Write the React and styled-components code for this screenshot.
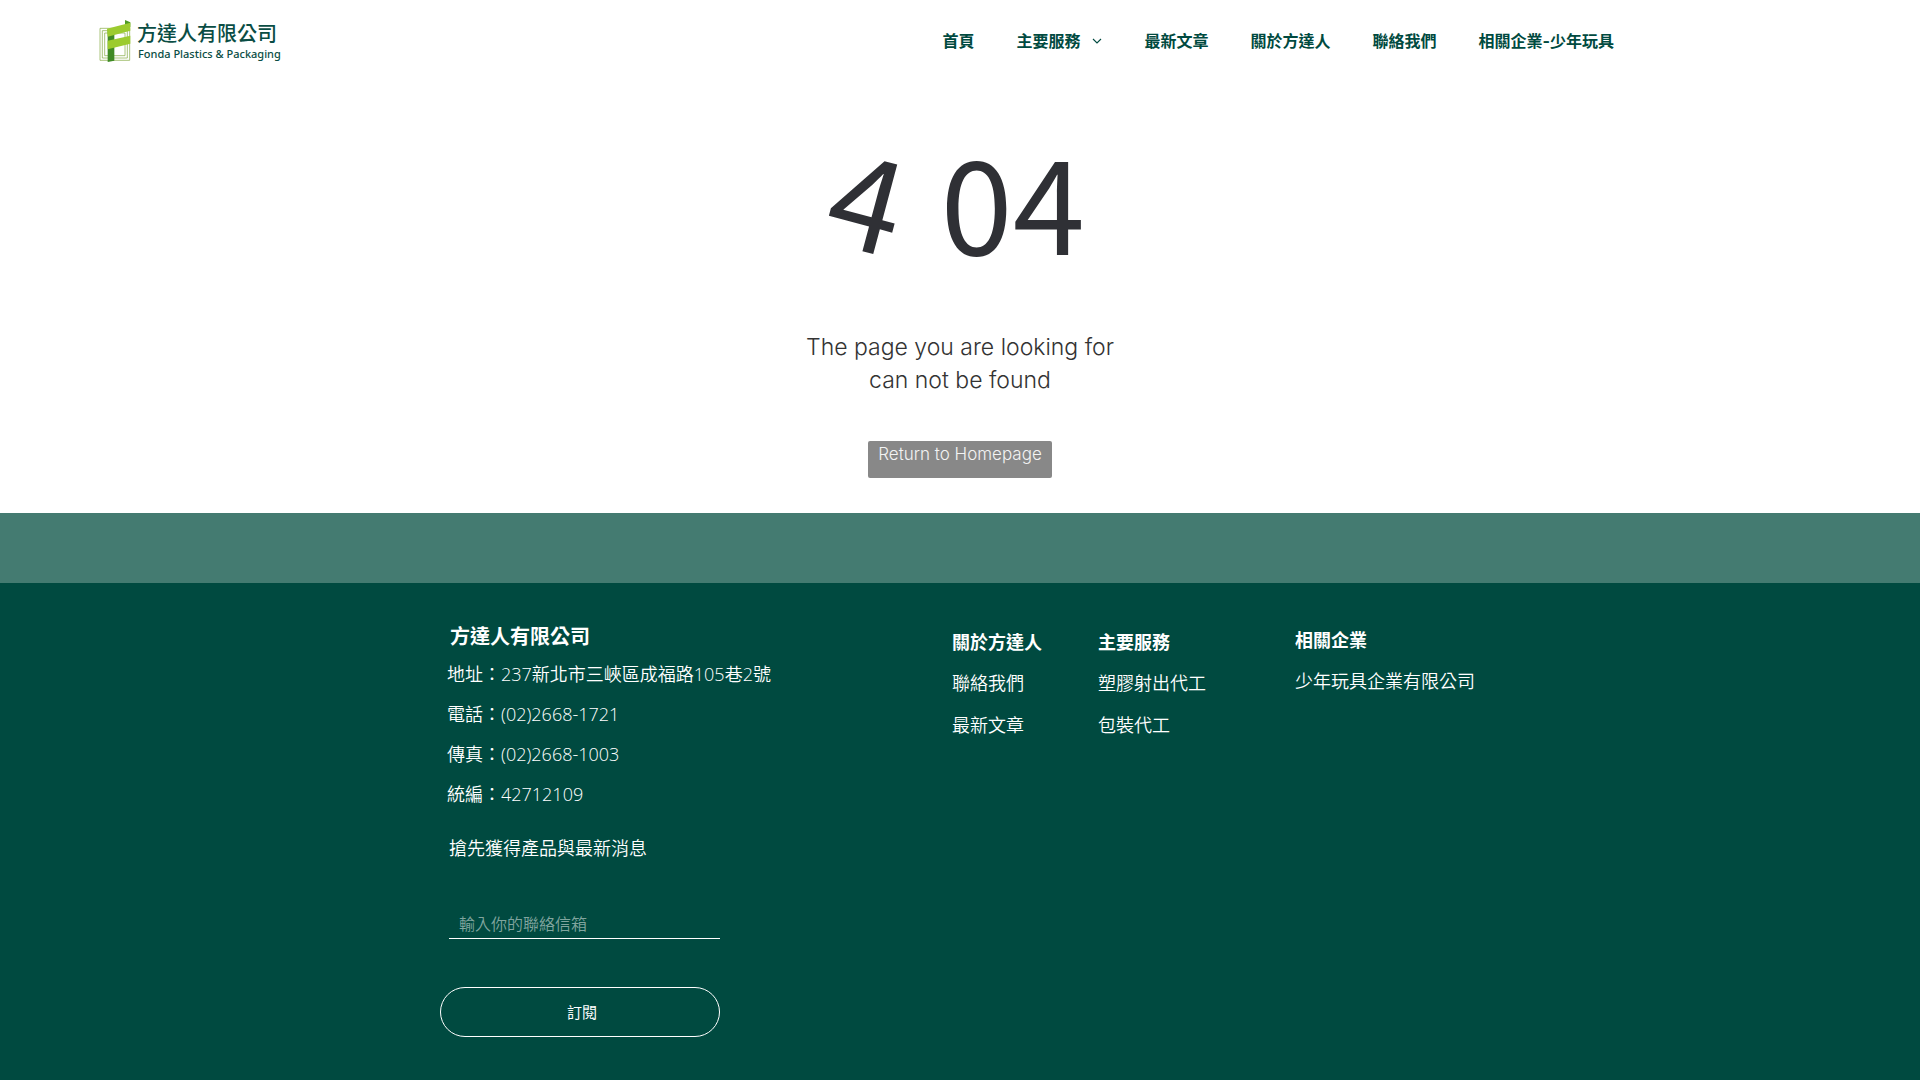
import React from "react";
import styled, { createGlobalStyle } from "styled-components";

const cjk = `"Noto Sans CJK TC", sans-serif`;

const GlobalStyle = createGlobalStyle`
  * { box-sizing: border-box; }
  body { margin: 0; background: #fff; font-family: Inter, ${cjk}; }
  h1, h2, p, ul { margin: 0; padding: 0; }
  ul { list-style: none; }
  a { color: inherit; text-decoration: none; }
`;

const Page = styled.div`
  min-height: 100vh;
  display: flex;
  flex-direction: column;
`;

const Header = styled.header`
  display: flex;
  justify-content: space-between;
  align-items: center;
  height: 82px;
  padding: 0 306px 0 99px;
`;

const Logo = styled.a`
  display: flex;
  align-items: center;
  gap: 6px;
  color: #0a4d44;
`;

const LogoText = styled.span`
  display: flex;
  flex-direction: column;
  padding-top: 2px;
`;

const LogoName = styled.span`
  font: 500 20px/24px ${cjk};
`;

const LogoSub = styled.span`
  font: 500 11px/18px "Noto Sans", sans-serif;
  white-space: nowrap;
  padding-left: 1px;
`;

const Nav = styled.nav`
  display: flex;
  gap: 42px;
`;

const NavLink = styled.a`
  display: flex;
  align-items: center;
  gap: 12px;
  color: #004a40;
  font: 700 16px/24px Inter, ${cjk};
  white-space: nowrap;
`;

const Main = styled.main`
  display: flex;
  flex-direction: column;
  align-items: center;
  padding: 28px 20px 35px;
`;

const Code = styled.h1`
  color: #2f3035;
  font: 400 130px/176px ${cjk};
`;

const Tilted = styled.span`
  display: inline-block;
  margin-right: 4px;
  transform: rotate(15deg);
  transform-origin: 70% 45%;
`;

const Message = styled.p`
  width: 340px;
  margin-top: 45px;
  color: #333;
  font-size: 23px;
  font-weight: 300;
  line-height: 33px;
  text-align: center;
`;

const HomeLink = styled.a`
  width: 184px;
  height: 37px;
  margin-top: 44px;
  border-radius: 2px;
  background: #888;
  && { color: #f3f3f3; }
  font-size: 17px;
  font-weight: 300;
  line-height: 26px;
  text-align: center;
  white-space: nowrap;
`;

const Band = styled.div`
  height: 70px;
  background: #447b71;
`;

const Footer = styled.footer`
  flex: 1;
  padding: 36px 20px 43px;
  background: #004a40;
  color: #fff;
`;

const FooterGrid = styled.div`
  display: grid;
  grid-template-columns: 512px 146px 197px 185px;
  max-width: 1040px;
  margin: 0 auto;
`;

const Company = styled.section`
  width: 340px;
`;

const CompanyName = styled.h2`
  margin-bottom: 1px;
  padding-left: 10px;
  font: 700 20px/34px ${cjk};
`;

const Contact = styled.address`
  padding-left: 7px;
  font: 350 18px/40px "Open Sans", ${cjk};
  white-space: nowrap;
`;

const Form = styled.form`
  display: flex;
  flex-direction: column;
  width: 280px;
  margin-top: 19px;
`;

const FormLabel = styled.label`
  padding-left: 9px;
  font: 350 18px/28px ${cjk};
`;

const Email = styled.input`
  height: 30px;
  margin: 48px 0 48px 9px;
  padding: 0 10px 2px;
  border: 0;
  border-bottom: 1px solid #fff;
  outline: 0;
  background: transparent;
  color: #fff;
  font: 350 16px/24px ${cjk};
  &::placeholder { color: #80a59f; opacity: 1; }
`;

const Subscribe = styled.button`
  height: 50px;
  padding: 0 0 0 4px;
  border: 1px solid #fff;
  border-radius: 25px;
  background: transparent;
  color: #fff;
  font: 400 15px/24px ${cjk};
`;

const Column = styled.section`
  padding-top: ${(p) => p.$top}px;
  white-space: nowrap;
`;

const ColumnTitle = styled.h2`
  font: 700 18px/40px ${cjk};
`;

const ColumnItem = styled.li`
  font: 350 18px/42px ${cjk};
`;

const Chevron = () => (
  <svg width="10" height="6" viewBox="0 0 10 6" fill="none" stroke="#004a40" strokeWidth="1.1" aria-hidden="true">
    <path d="M1 1l4 4 4-4" />
  </svg>
);

const Mark = () => (
  <svg width="32" height="43" viewBox="0 0 96 129" aria-hidden="true">
    <g fill="none" stroke="#7fa63a" strokeWidth="2">
      <path d="M3 25h89v96H3z" />
      <path d="M10 32h75v82H10z" />
      <path d="M17 39h61v68H17z" />
    </g>
    <path d="M26 30l20-4v96l-20 4z" fill="#3f8a24" />
    <path d="M78 0l16 7v14l-16-6z" fill="#4f9a25" />
    <path d="M24 26l70-18v24L26 50z" fill="#9ccb2f" />
    <path d="M26 62l68-15v24L26 88z" fill="#9ccb2f" />
  </svg>
);

const nav = ["首頁", "主要服務", "最新文章", "關於方達人", "聯絡我們", "相關企業-少年玩具"];

const columns = [
  { title: "關於方達人", items: ["聯絡我們", "最新文章"], top: 2 },
  { title: "主要服務", items: ["塑膠射出代工", "包裝代工"], top: 2 },
  { title: "相關企業", items: ["少年玩具企業有限公司"], top: 0 },
];

export default function App() {
  return (
    <Page>
      <GlobalStyle />
      <Header>
        <Logo href="#">
          <Mark />
          <LogoText>
            <LogoName>方達人有限公司</LogoName>
            <LogoSub>Fonda Plastics &amp; Packaging</LogoSub>
          </LogoText>
        </Logo>
        <Nav>
          {nav.map((label) => (
            <NavLink href="#" key={label}>
              {label}
              {label === "主要服務" && <Chevron />}
            </NavLink>
          ))}
        </Nav>
      </Header>
      <Main>
        <Code><Tilted>4</Tilted> 04</Code>
        <Message>The page you are looking for<br />can not be found</Message>
        <HomeLink href="#">Return to Homepage</HomeLink>
      </Main>
      <Band />
      <Footer>
        <FooterGrid>
          <Company>
            <CompanyName>方達人有限公司</CompanyName>
            <Contact>
              <p>地址：237新北市三峽區成福路105巷2號</p>
              <p>電話：(02)2668-1721</p>
              <p>傳真：(02)2668-1003</p>
              <p>統編：42712109</p>
            </Contact>
            <Form onSubmit={(e) => e.preventDefault()}>
              <FormLabel htmlFor="email">搶先獲得產品與最新消息</FormLabel>
              <Email id="email" type="email" placeholder="輸入你的聯絡信箱" />
              <Subscribe type="submit">訂閱</Subscribe>
            </Form>
          </Company>
          {columns.map((c) => (
            <Column key={c.title} $top={c.top}>
              <ColumnTitle>{c.title}</ColumnTitle>
              <ul>
                {c.items.map((item) => (
                  <ColumnItem key={item}><a href="#">{item}</a></ColumnItem>
                ))}
              </ul>
            </Column>
          ))}
        </FooterGrid>
      </Footer>
    </Page>
  );
}
